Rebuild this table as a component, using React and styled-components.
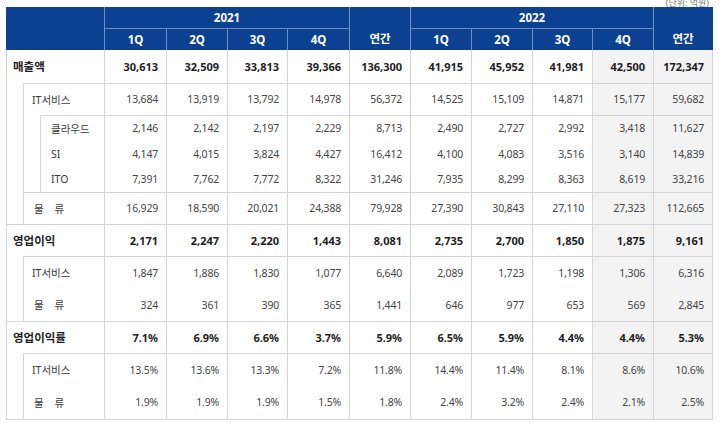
import React from "react";
import styled, { createGlobalStyle } from "styled-components";

const GlobalStyle = createGlobalStyle`
  html, body {
    margin: 0;
    padding: 0;
    background: #ffffff;
  }
  body {
    font-family: "Noto Sans", "Noto Sans CJK KR", sans-serif;
    color: #333;
  }
`;

const LINE = "1px solid #d5d5d5";
const HEAD_LINE = "1px solid #6f8fc4";

const Page = styled.div`
  width: 720px;
  height: 423px;
  overflow: hidden;
  padding: 0 8px 0 6px;
  box-sizing: border-box;
`;

const Unit = styled.div`
  height: 7px;
  display: flex;
  justify-content: flex-end;
  align-items: flex-end;
  padding-right: 3px;
  font-size: 9px;
  line-height: 9px;
  color: #777;
  span {
    transform: translateY(0px);
  }
`;

const Table = styled.table`
  width: 706px;
  table-layout: fixed;
  border-collapse: collapse;
  border-spacing: 0;
  border-bottom: ${LINE};
`;

const HeadRow = styled.tr`
  height: ${(p) => p.$h}px;
`;

const Th = styled.th`
  background: #0c4191;
  color: #ffffff;
  font-size: 11.5px;
  font-weight: 700;
  padding: 0;
  text-align: center;
  vertical-align: ${(p) => (p.$bottom ? "bottom" : "middle")};
  padding-bottom: ${(p) => (p.$bottom ? "4px" : "0")};
  border-left: ${HEAD_LINE};
  border-right: ${HEAD_LINE};
  border-bottom: ${(p) => (p.$under ? HEAD_LINE : "none")};
  &:first-child {
    border-left: 1px solid #0c4191;
  }
  &:last-child {
    border-right: 1px solid #0c4191;
  }
`;

const Row = styled.tr`
  height: ${(p) => p.$h}px;
`;

const Indent = styled.td`
  padding: 0;
  border-left: ${LINE};
  border-right: ${LINE};
  border-top: none;
  border-bottom: ${(p) => (p.$closed ? LINE : "none")};
`;

const Label = styled.td`
  padding: 0 0 0 ${(p) => p.$pad}px;
  border-left: ${LINE};
  border-right: ${LINE};
  border-top: ${(p) => (p.$line ? LINE : "none")};
  font-size: ${(p) => (p.$bold ? "11.5px" : "10.5px")};
  font-weight: ${(p) => (p.$bold ? 700 : 400)};
  color: ${(p) => (p.$bold ? "#1e1e1e" : "#3a3a3a")};
  letter-spacing: ${(p) => (p.$spaced ? "4px" : "0")};
  white-space: nowrap;
  vertical-align: middle;
`;

const Num = styled.td`
  padding: 0 8px 0 0;
  text-align: right;
  vertical-align: middle;
  border-left: ${LINE};
  border-right: ${LINE};
  border-top: ${(p) => (p.$line ? LINE : "none")};
  background: ${(p) => (p.$shade ? "#f3f3f3" : "transparent")};
  font-size: ${(p) => (p.$bold ? "11px" : "10.5px")};
  font-weight: ${(p) => (p.$bold ? 700 : 400)};
  color: ${(p) => (p.$bold ? "#1e1e1e" : "#444")};
  letter-spacing: ${(p) => (p.$bold ? "0" : "-0.2px")};
  white-space: nowrap;
`;

const widths = [17, 17, 64, 62, 61, 60, 62, 61, 61, 61, 60, 61, 59];

const Values = ({ list, bold, line }) =>
  list.map((v, i) => (
    <Num key={i} $bold={bold} $line={line} $shade={i >= 8}>
      {v}
    </Num>
  ));

const data = {
  sales: ["30,613", "32,509", "33,813", "39,366", "136,300", "41,915", "45,952", "41,981", "42,500", "172,347"],
  salesIt: ["13,684", "13,919", "13,792", "14,978", "56,372", "14,525", "15,109", "14,871", "15,177", "59,682"],
  cloud: ["2,146", "2,142", "2,197", "2,229", "8,713", "2,490", "2,727", "2,992", "3,418", "11,627"],
  si: ["4,147", "4,015", "3,824", "4,427", "16,412", "4,100", "4,083", "3,516", "3,140", "14,839"],
  ito: ["7,391", "7,762", "7,772", "8,322", "31,246", "7,935", "8,299", "8,363", "8,619", "33,216"],
  salesLogi: ["16,929", "18,590", "20,021", "24,388", "79,928", "27,390", "30,843", "27,110", "27,323", "112,665"],
  op: ["2,171", "2,247", "2,220", "1,443", "8,081", "2,735", "2,700", "1,850", "1,875", "9,161"],
  opIt: ["1,847", "1,886", "1,830", "1,077", "6,640", "2,089", "1,723", "1,198", "1,306", "6,316"],
  opLogi: ["324", "361", "390", "365", "1,441", "646", "977", "653", "569", "2,845"],
  margin: ["7.1%", "6.9%", "6.6%", "3.7%", "5.9%", "6.5%", "5.9%", "4.4%", "4.4%", "5.3%"],
  marginIt: ["13.5%", "13.6%", "13.3%", "7.2%", "11.8%", "14.4%", "11.4%", "8.1%", "8.6%", "10.6%"],
  marginLogi: ["1.9%", "1.9%", "1.9%", "1.5%", "1.8%", "2.4%", "3.2%", "2.4%", "2.1%", "2.5%"],
};

const quarters = ["1Q", "2Q", "3Q", "4Q"];

export default function App() {
  return (
    <Page>
      <GlobalStyle />
      <Unit>
        <span>(단위: 억원)</span>
      </Unit>
      <Table>
        <colgroup>
          {widths.map((w, i) => (
            <col key={i} style={{ width: w }} />
          ))}
        </colgroup>
        <thead>
          <HeadRow $h={21}>
            <Th colSpan={3} rowSpan={2} />
            <Th colSpan={4} $under>
              2021
            </Th>
            <Th rowSpan={2} $bottom>
              연간
            </Th>
            <Th colSpan={4} $under>
              2022
            </Th>
            <Th rowSpan={2} $bottom>
              연간
            </Th>
          </HeadRow>
          <HeadRow $h={22}>
            {quarters.map((q) => (
              <Th key={"a" + q}>{q}</Th>
            ))}
            {quarters.map((q) => (
              <Th key={"b" + q}>{q}</Th>
            ))}
          </HeadRow>
        </thead>
        <tbody>
          <Row $h={33}>
            <Label colSpan={3} $bold $pad={6}>
              매출액
            </Label>
            <Values list={data.sales} bold />
          </Row>
          <Row $h={32}>
            <Indent rowSpan={5} />
            <Label colSpan={2} $line $pad={8}>
              IT서비스
            </Label>
            <Values list={data.salesIt} line />
          </Row>
          <Row $h={26}>
            <Indent rowSpan={3} $closed />
            <Label $line $pad={10}>
              클라우드
            </Label>
            <Values list={data.cloud} line />
          </Row>
          <Row $h={25}>
            <Label $pad={10}>SI</Label>
            <Values list={data.si} />
          </Row>
          <Row $h={26}>
            <Label $pad={10}>ITO</Label>
            <Values list={data.ito} />
          </Row>
          <Row $h={32}>
            <Label colSpan={2} $line $spaced $pad={10}>
              물 류
            </Label>
            <Values list={data.salesLogi} line />
          </Row>

          <Row $h={32}>
            <Label colSpan={3} $bold $line $pad={6}>
              영업이익
            </Label>
            <Values list={data.op} bold line />
          </Row>
          <Row $h={33}>
            <Indent rowSpan={2} />
            <Label colSpan={2} $line $pad={8}>
              IT서비스
            </Label>
            <Values list={data.opIt} line />
          </Row>
          <Row $h={32}>
            <Label colSpan={2} $spaced $pad={10}>
              물 류
            </Label>
            <Values list={data.opLogi} />
          </Row>

          <Row $h={32}>
            <Label colSpan={3} $bold $line $pad={6}>
              영업이익률
            </Label>
            <Values list={data.margin} bold line />
          </Row>
          <Row $h={33}>
            <Indent rowSpan={2} />
            <Label colSpan={2} $line $pad={8}>
              IT서비스
            </Label>
            <Values list={data.marginIt} line />
          </Row>
          <Row $h={33}>
            <Label colSpan={2} $spaced $pad={10}>
              물 류
            </Label>
            <Values list={data.marginLogi} />
          </Row>
        </tbody>
      </Table>
    </Page>
  );
}
